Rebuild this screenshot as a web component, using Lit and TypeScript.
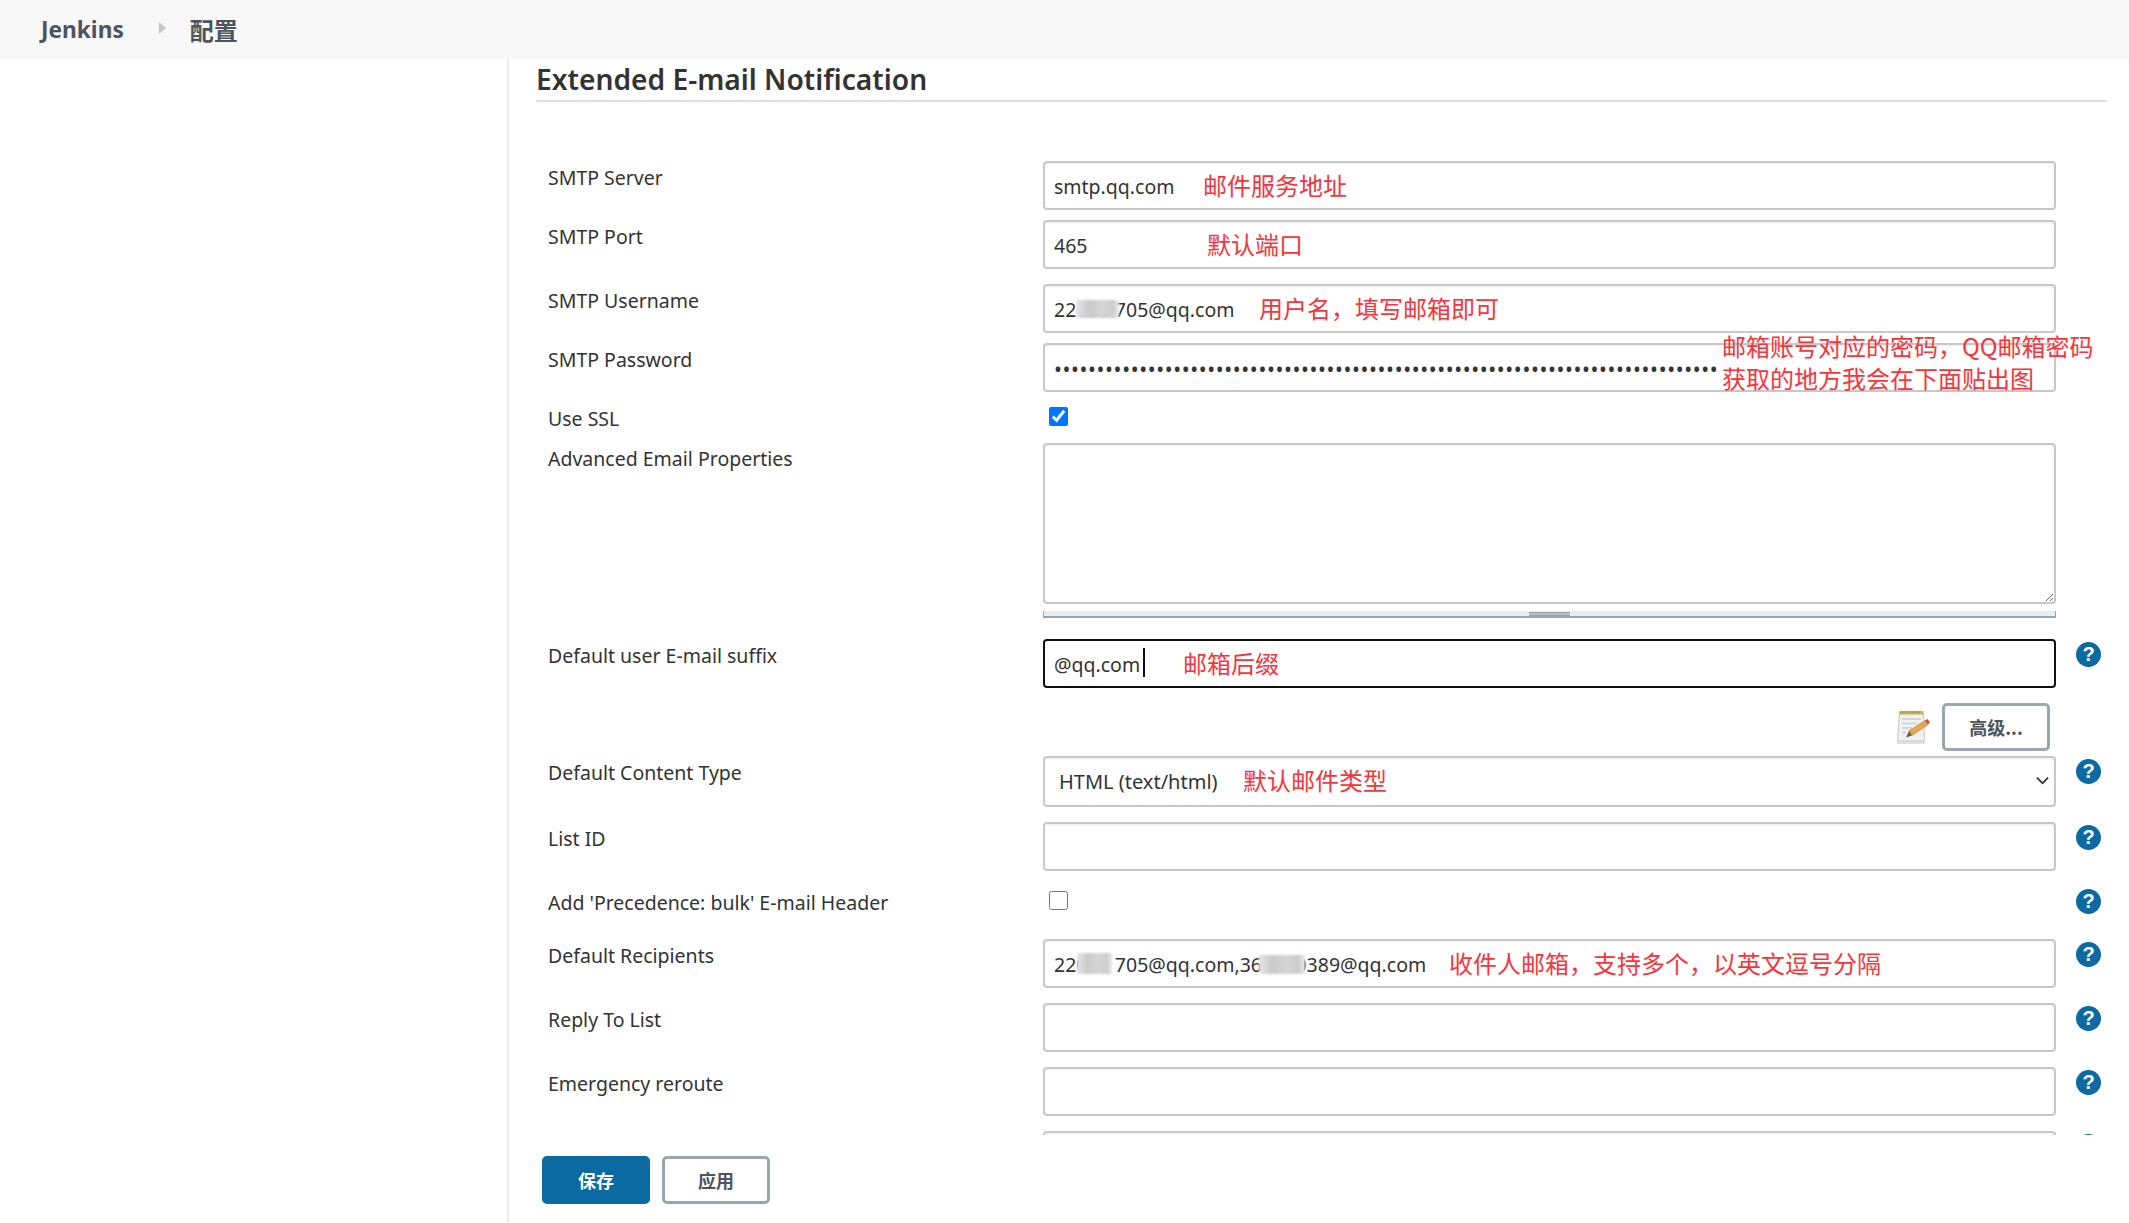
import { LitElement, css, html, nothing } from "lit";
import { customElement } from "lit/decorators.js";

type Kind = "text" | "password" | "check" | "textarea" | "select" | "advanced";

interface Patch {
	left: number;
	width: number;
	top: number;
	height: number;
}

interface Row {
	label: string;
	kind: Kind;
	gap: number;
	height: number;
	value?: string;
	checked?: boolean;
	help?: boolean;
	focused?: boolean;
	note?: string;
	noteLeft?: number;
	patches?: Patch[];
}

const ROWS: Row[] = [
	{ label: "SMTP Server", kind: "text", gap: 59, height: 49, value: "smtp.qq.com", note: "邮件服务地址", noteLeft: 160 },
	{ label: "SMTP Port", kind: "text", gap: 10, height: 49, value: "465", note: "默认端口", noteLeft: 164 },
	{
		label: "SMTP Username", kind: "text", gap: 15, height: 49, value: "22000\u00a0705@qq.com",
		note: "用户名，填写邮箱即可", noteLeft: 216, patches: [{ left: 33, width: 43, top: 16, height: 18 }]
	},
	{ label: "SMTP Password", kind: "password", gap: 10, height: 49, value: "x".repeat(78) },
	{ label: "Use SSL", kind: "check", gap: 15, height: 19, checked: true },
	{ label: "Advanced Email Properties", kind: "textarea", gap: 17, height: 175 },
	{ label: "Default user E-mail suffix", kind: "text", gap: 21, height: 49, value: "@qq.com", note: "邮箱后缀", noteLeft: 140, help: true, focused: true },
	{ label: "", kind: "advanced", gap: 15, height: 48 },
	{ label: "Default Content Type", kind: "select", gap: 5, height: 51, value: "HTML (text/html)", note: "默认邮件类型", noteLeft: 200, help: true },
	{ label: "List ID", kind: "text", gap: 15, height: 49, help: true },
	{ label: "Add 'Precedence: bulk' E-mail Header", kind: "check", gap: 20, height: 19, help: true },
	{
		label: "Default Recipients", kind: "text", gap: 29, height: 49, value: "22000\u00a0705@qq.com,360000389@qq.com",
		note: "收件人邮箱，支持多个，以英文逗号分隔", noteLeft: 406, help: true,
		patches: [{ left: 34, width: 35, top: 14, height: 21 }, { left: 216, width: 46, top: 16, height: 19 }]
	},
	{ label: "Reply To List", kind: "text", gap: 15, height: 49, help: true },
	{ label: "Emergency reroute", kind: "text", gap: 15, height: 49, help: true },
	{ label: "", kind: "text", gap: 15, height: 49, help: true },
];

@customElement("app-root")
export class AppRoot extends LitElement {

	_control(row: Row) {
		switch (row.kind) {
			case "check":
				return html`<input class="tick" type="checkbox" .checked=${!!row.checked} />`;
			case "textarea":
				return html`
					<textarea class="area"></textarea>
					<div class="grip"><span></span></div>
				`;
			case "select":
				return html`
					<select class="field dropdown"><option>${row.value}</option></select>
					<svg class="chevron" viewBox="0 0 14 9"><path d="M1 1.500 7 7.500 13 1.500" fill="none" stroke="#333" stroke-width="2"/></svg>
				`;
			case "advanced":
				return html`
					<div class="more">
						${this._noteIcon()}
						<button class="btn">高级...</button>
					</div>
				`;
			case "password":
				return html`
					<input class="field dots" type="password" .value=${row.value ?? ""} />
					<div class="pwd-note">邮箱账号对应的密码，QQ邮箱密码<br />获取的地方我会在下面贴出图</div>
				`;
			default:
				return html`
					<input class="field ${row.focused ? "focused" : ""}" type="text" .value=${row.value ?? ""} />
					${row.focused ? html`<span class="caret"></span>` : nothing}
					${(row.patches ?? []).map(p => html`<span class="patch" style="left:${p.left}px;width:${p.width}px;top:${p.top}px;height:${p.height}px"></span>`)}
				`;
		}
	}

	_noteIcon() {
		return html`
			<svg class="note" viewBox="0 0 35 35">
				<path d="M2 31h27l1 3H2z" fill="#e2e2e2"/>
				<path d="M4.500 3.500h24l1 27.500H2.500z" fill="#f1f1f1" stroke="#c6c6c6"/>
				<rect x="4.500" y="1" width="24" height="3.500" fill="#c9b25d"/>
				<path d="M6 1v2.500m3-2.500v2.500m3-2.500v2.500m3-2.500v2.500m3-2.500v2.500m3-2.500v2.500m3-2.500v2.500" stroke="#9c8a44"/>
				<path d="M7 9h19M7 13.500h15M7 18h10M7 22.500h4" stroke="#c9ced2" stroke-width="1.500"/>
				<path d="M14 21 30 10.500 33 14.500 17 25.500z" fill="#e6aa4c" stroke="#a9772a" stroke-width=".6"/>
				<path d="M30 10.500 32.500 9 35 12.500 33 14.500z" fill="#dd4a42"/>
				<path d="M11 27.500 14 21 17 25.500z" fill="#6b5a42"/>
			</svg>
		`;
	}

	_row(row: Row) {
		return html`
			<div class="row kind-${row.kind}" style="margin-top:${row.gap}px;height:${row.height}px">
				<div class="label">${row.label}</div>
				<div class="control">
					${this._control(row)}
					${row.note ? html`<span class="remark" style="left:${row.noteLeft}px">${row.note}</span>` : nothing}
				</div>
				${row.help ? html`<span class="help">?</span>` : nothing}
			</div>
		`;
	}

	render() {
		return html`
			<header class="crumbs">
				<span class="home">Jenkins</span>
				<span class="arrow"></span>
				<span class="page">配置</span>
			</header>
			<div class="body">
				<aside class="side"></aside>
				<main class="main">
					<div class="scroll">
						<h2 class="title">Extended E-mail Notification</h2>
						<div class="form">${ROWS.map(r => this._row(r))}</div>
					</div>
					<div class="actions">
						<button class="btn primary">保存</button>
						<button class="btn">应用</button>
					</div>
				</main>
			</div>
		`;
	}

	static styles = css`
		:host {
			display: block;
			width: 2129px;
			height: 1223px;
			overflow: hidden;
			background: #fff;
			color: #333;
			font-family: "Noto Sans", "Noto Sans CJK SC", sans-serif;
			font-size: 19.5px;
		}
		* { box-sizing: border-box; }
		.crumbs {
			display: flex;
			align-items: center;
			height: 59px;
			padding-left: 41px;
			background: #f8f8f8;
			color: #4d545d;
			font-weight: 700;
		}
		.home { font-size: 22.7px; }
		.arrow {
			margin: -3px 24px 0 35px;
			border-left: 7px solid #c4c8cb;
			border-top: 6px solid transparent;
			border-bottom: 6px solid transparent;
		}
		.page { font-size: 24px; font-family: "Noto Sans CJK SC", sans-serif; font-weight: 700; }
		.body { display: flex; height: 1164px; }
		.side {
			flex: none;
			width: 509px;
			border-right: 2px solid #e9edf0;
		}
		.main { flex: 1; padding: 0 22px 0 27px; min-width: 0; }
		.scroll { height: 1076px; overflow: hidden; }
		.title {
			margin: 0;
			height: 43px;
			line-height: 40px;
			border-bottom: 2px solid #e0e0e0;
			font-size: 28.2px;
			font-weight: 600;
			color: #333;
		}
		.form { padding-left: 12px; }
		.row {
			display: grid;
			grid-template-columns: 495px 1013px 64px;
			align-items: start;
		}
		.label { line-height: 34px; white-space: nowrap; }
		.kind-check .label { line-height: 24px; }
		.kind-textarea .label { line-height: 32px; }
		.control { position: relative; }
		.field, .area {
			display: block;
			width: 100%;
			border: 2px solid #c8c8c8;
			border-radius: 4px;
			background: #fff;
			box-shadow: inset 0 1px 2px rgba(0, 0, 0, .08);
			color: #333;
			font: inherit;
			outline: none;
		}
		.field { height: 49px; padding: 2px 8px 0 9px; }
		.field.focused { border-color: #111; box-shadow: none; }
		.dropdown { height: 51px; padding: 0 0 0 14px; font-size: 20px; appearance: none; }
		.chevron { position: absolute; right: 7px; top: 20px; width: 13px; height: 9px; }
		.dots { font-size: 21px; letter-spacing: .62px; padding: 3px 8px 0 9px; }
		.area { height: 161px; resize: vertical; }
		.grip {
			display: flex;
			justify-content: center;
			align-items: center;
			height: 7px;
			margin-top: 7px;
			background: #e9edf0;
			border: solid #9aa6ae;
			border-width: 0 1px 2px;
		}
		.grip span {
			width: 41px;
			height: 4px;
			border-top: 1px solid #9aa6ae;
			border-bottom: 1px solid #9aa6ae;
			background: #b9c1c6;
		}
		.tick {
			display: block;
			width: 19px;
			height: 19px;
			margin: 0 0 0 6px;
			accent-color: #0075ff;
		}
		.help {
			justify-self: start;
			width: 25px;
			height: 25px;
			margin: 3px 0 0 20px;
			border-radius: 50%;
			background: #0b6aa2;
			color: #fff;
			font-family: "Liberation Sans", sans-serif;
			font-size: 20px;
			font-weight: 700;
			line-height: 25px;
			text-align: center;
		}
		.kind-check .help { margin-top: -2px; }
		.remark, .pwd-note {
			position: absolute;
			color: #f8343a;
			font-family: "Noto Sans CJK SC", sans-serif;
			font-size: 24px;
			white-space: nowrap;
		}
		.remark { top: 8px; line-height: 32px; }
		.pwd-note { left: 679px; top: -13px; line-height: 32px; }
		.caret { position: absolute; left: 100px; top: 9px; width: 1.500px; height: 29px; background: #111; }
		.patch {
			position: absolute;
			background: linear-gradient(90deg, #e6e6e6, #cacaca 30%, #d6d6d6 60%, #cccccc 85%, #ececec);
			filter: blur(1px);
		}
		.more {
			display: flex;
			justify-content: flex-end;
			align-items: center;
			gap: 12px;
			padding-right: 6px;
		}
		.note { width: 35px; height: 35px; }
		.btn {
			width: 108px;
			height: 48px;
			padding: 0;
			border: 3px solid #9aa7af;
			border-radius: 5px;
			background: #fff;
			color: #4d545d;
			font-family: "Noto Sans CJK SC", sans-serif;
			font-size: 18px;
			font-weight: 700;
		}
		.btn.primary { border-color: #0b6aa2; background: #0b6aa2; color: #fff; }
		.actions { display: flex; gap: 12px; padding: 21px 0 0 6px; }
	`;
}

declare global {
	interface HTMLElementTagNameMap {
		"app-root": AppRoot
	}
}
